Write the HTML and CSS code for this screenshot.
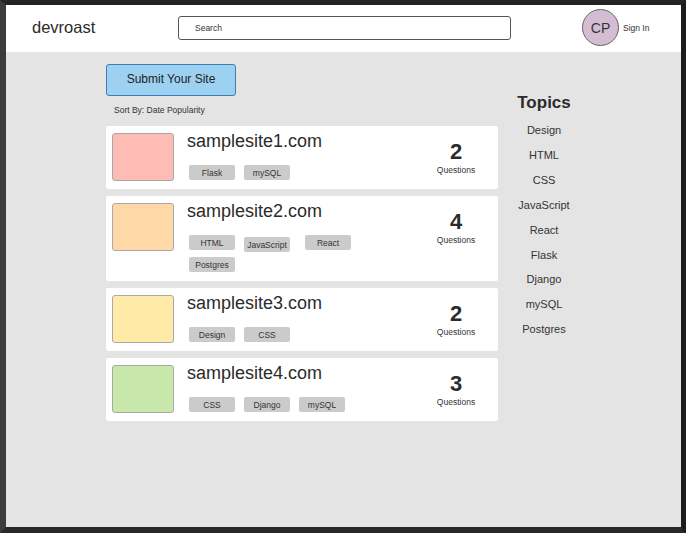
FILE: index.html
```html
<!DOCTYPE html>
<html lang="en">
<head>
<meta charset="utf-8">
<title>devroast</title>
<link rel="stylesheet" href="styles.css">
</head>
<body>
<div class="frame">
  <header class="topbar">
    <div class="logo">devroast</div>
    <div class="search">Search</div>
    <div class="user">
      <div class="avatar">CP</div>
      <span class="signin">Sign In</span>
    </div>
  </header>
  <div class="content">
    <main class="feed">
      <button class="submit">Submit Your Site</button>
      <div class="sort">Sort By: Date Popularity</div>
      <div class="list">
        <div class="card">
          <div class="thumb thumb-pink"></div>
          <div class="body">
            <div class="title">samplesite1.com</div>
            <div class="tags">
              <span class="tag">Flask</span>
              <span class="tag">mySQL</span>
            </div>
          </div>
          <div class="count">
            <div class="num">2</div>
            <div class="label">Questions</div>
          </div>
        </div>
        <div class="card">
          <div class="thumb thumb-orange"></div>
          <div class="body">
            <div class="title">samplesite2.com</div>
            <div class="tags">
              <span class="tag">HTML</span>
              <span class="tag tag-nudge">JavaScript</span>
              <span class="tag tag-gap">React</span>
              <span class="tag">Postgres</span>
            </div>
          </div>
          <div class="count">
            <div class="num">4</div>
            <div class="label">Questions</div>
          </div>
        </div>
        <div class="card">
          <div class="thumb thumb-yellow"></div>
          <div class="body">
            <div class="title">samplesite3.com</div>
            <div class="tags">
              <span class="tag">Design</span>
              <span class="tag">CSS</span>
            </div>
          </div>
          <div class="count">
            <div class="num">2</div>
            <div class="label">Questions</div>
          </div>
        </div>
        <div class="card">
          <div class="thumb thumb-green"></div>
          <div class="body">
            <div class="title">samplesite4.com</div>
            <div class="tags">
              <span class="tag">CSS</span>
              <span class="tag">Django</span>
              <span class="tag">mySQL</span>
            </div>
          </div>
          <div class="count">
            <div class="num">3</div>
            <div class="label">Questions</div>
          </div>
        </div>
      </div>
    </main>
    <aside class="topics">
      <h2 class="topics-title">Topics</h2>
      <ul class="topic-list">
        <li>Design</li>
        <li>HTML</li>
        <li>CSS</li>
        <li>JavaScript</li>
        <li>React</li>
        <li>Flask</li>
        <li>Django</li>
        <li>mySQL</li>
        <li>Postgres</li>
      </ul>
    </aside>
  </div>
</div>
</body>
</html>
```
FILE: styles.css
```css
html, body {
  margin: 0;
  padding: 0;
}
body {
  background: #262626;
  font-family: "Liberation Sans", Arial, sans-serif;
  color: #333;
}
.frame {
  box-sizing: border-box;
  width: 686px;
  height: 533px;
  border-top: 5px solid #242424;
  border-left: 6px solid #3c3c3c;
  border-right: 5px solid #1c1c1c;
  border-bottom: 6px solid #282828;
  background: #e4e4e4;
  display: flex;
  flex-direction: column;
}
.topbar {
  box-sizing: border-box;
  height: 47px;
  flex: none;
  background: #fff;
  display: flex;
  align-items: center;
  padding-left: 26px;
  padding-bottom: 2px;
}
.logo {
  width: 146px;
  font-size: 16.5px;
  color: #2b2b2b;
}
.search {
  box-sizing: border-box;
  width: 333px;
  height: 24px;
  border: 1px solid #555;
  border-radius: 3px;
  padding-left: 16px;
  font-size: 8.5px;
  color: #333;
  display: flex;
  align-items: center;
  margin-right: 71px;
}
.user {
  display: flex;
  align-items: center;
}
.avatar {
  box-sizing: border-box;
  width: 37px;
  height: 37px;
  border-radius: 50%;
  background: #d4bdd3;
  border: 1px solid #666;
  display: flex;
  align-items: center;
  justify-content: center;
  font-size: 14px;
  color: #333;
}
.signin {
  font-size: 8.5px;
  margin-left: 4px;
  color: #333;
}
.content {
  display: flex;
  align-items: flex-start;
}
.feed {
  margin-left: 100px;
  width: 392px;
  padding-top: 12px;
}
.submit {
  box-sizing: border-box;
  display: block;
  width: 130px;
  height: 32px;
  padding: 0 0 2px;
  background: #9dd1f2;
  border: 1px solid #3d7db3;
  border-radius: 3px;
  font-family: inherit;
  font-size: 12px;
  color: #222;
}
.sort {
  font-size: 8.5px;
  line-height: 10px;
  padding-left: 8px;
  margin-top: 9px;
  margin-bottom: 11px;
}
.list {
  display: flex;
  flex-direction: column;
  gap: 7px;
}
.card {
  background: #fff;
  border-radius: 2px;
  display: flex;
  align-items: flex-start;
}
.thumb {
  box-sizing: border-box;
  flex: none;
  width: 62px;
  height: 48px;
  margin: 7px 0 8px 6px;
  border: 1px solid #a9a9a9;
  border-radius: 3px;
}
.thumb-pink { background: #ffbcb4; }
.thumb-orange { background: #fed9a7; }
.thumb-yellow { background: #ffeaa7; }
.thumb-green { background: #c8e7ab; }
.body {
  margin-left: 13px;
  padding-top: 5px;
  padding-bottom: 9px;
}
.title {
  font-size: 18px;
  line-height: 20px;
  color: #2b2b2b;
}
.tags {
  width: 170px;
  margin-top: 14px;
  margin-left: 2px;
  display: flex;
  flex-wrap: wrap;
  align-items: flex-start;
  column-gap: 9px;
  row-gap: 7px;
}
.tag {
  box-sizing: border-box;
  width: 46px;
  height: 15px;
  background: #cbcbcb;
  border-radius: 2px;
  font-size: 8.5px;
  display: flex;
  align-items: center;
  justify-content: center;
  color: #333;
}
.tag-nudge {
  margin-top: 2px;
  margin-bottom: -2px;
}
.tag-gap {
  margin-left: 6px;
}
.count {
  margin-left: auto;
  margin-right: 12px;
  width: 60px;
  padding-top: 15px;
  text-align: center;
}
.num {
  font-size: 22px;
  line-height: 22px;
  font-weight: bold;
  color: #2b2b2b;
}
.label {
  font-size: 8.5px;
  line-height: 10px;
  margin-top: 2px;
}
.topics {
  width: 92px;
  padding-top: 41px;
  text-align: center;
}
.topics-title {
  margin: 0;
  font-size: 17px;
  line-height: 20px;
  font-weight: bold;
  color: #2b2b2b;
}
.topic-list {
  list-style: none;
  margin: 5px 0 0;
  padding: 0;
}
.topic-list li {
  font-size: 11px;
  line-height: 24.9px;
  color: #333;
}
```
